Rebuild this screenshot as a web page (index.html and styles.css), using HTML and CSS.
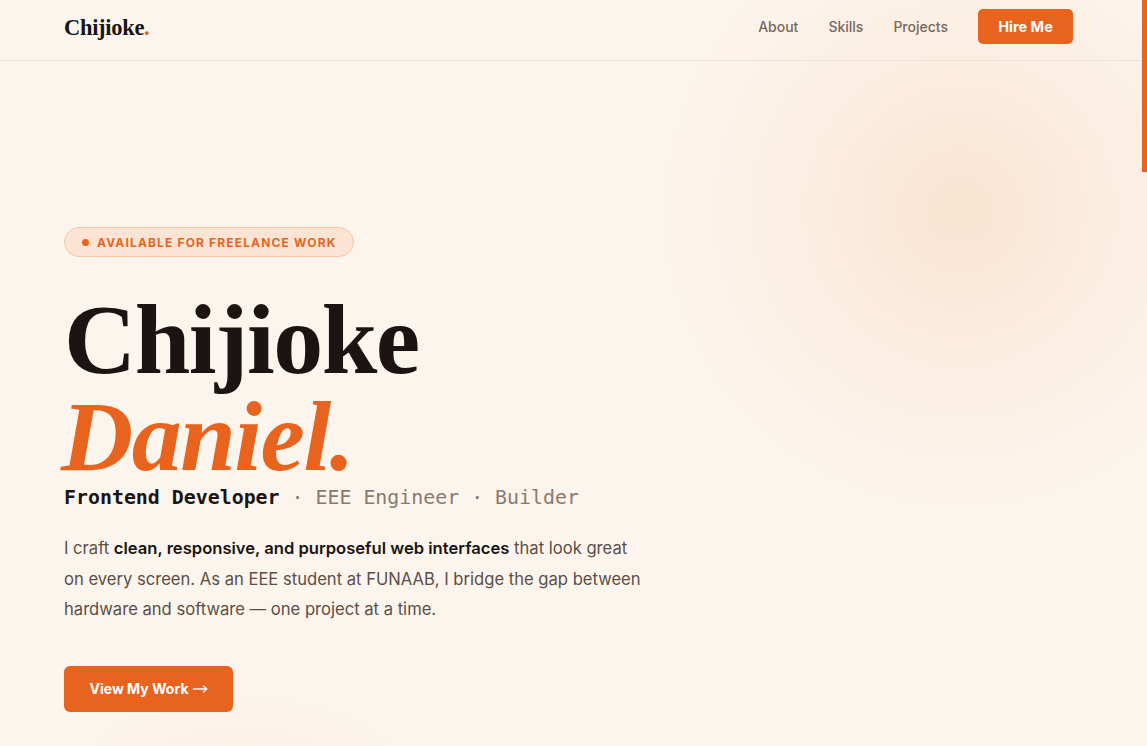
FILE: index.html
```html
<!DOCTYPE html>
<html lang="en">
<head>
<meta charset="utf-8">
<title>Chijioke Daniel</title>
<link rel="stylesheet" href="styles.css">
</head>
<body>
<div class="glow glow-top"></div>
<div class="glow glow-bottom"></div>
<header class="site-header">
  <a class="logo" href="#">Chijioke<span class="dot">.</span></a>
  <nav class="nav">
    <a href="#" class="nav-link">About</a>
    <a href="#" class="nav-link">Skills</a>
    <a href="#" class="nav-link">Projects</a>
    <a href="#" class="btn btn-small">Hire Me</a>
  </nav>
</header>
<main class="hero">
  <div class="badge"><span class="badge-dot"></span>AVAILABLE FOR FREELANCE WORK</div>
  <h1 class="title"><span class="first">Chijioke</span><span class="last">Daniel.</span></h1>
  <p class="roles"><span class="role-main">Frontend Developer</span> · EEE Engineer · Builder</p>
  <p class="intro">I craft <strong>clean, responsive, and purposeful web interfaces</strong> that look great on every screen. As an EEE student at FUNAAB, I bridge the gap between hardware and software — one project at a time.</p>
  <a href="#" class="btn btn-large">View My Work<svg class="arrow" width="15" height="8" viewBox="0 0 15 8" aria-hidden="true"><path d="M0.5 4 H13.5 M10.5 1 L13.8 4 L10.5 7" fill="none" stroke="#fff" stroke-width="1.3" stroke-linecap="round" stroke-linejoin="round"/></svg></a>
</main>
<div class="scroll-thumb"></div>
</body>
</html>
```
FILE: styles.css
```css
* { box-sizing: border-box; }
html, body { margin: 0; padding: 0; }
body {
  background: #fcf5ee;
  font-family: "Inter", "DejaVu Sans", sans-serif;
  color: #1a1512;
  height: 746px;
  overflow: hidden;
  position: relative;
}
a { text-decoration: none; color: inherit; }

.glow {
  position: absolute;
  border-radius: 50%;
  pointer-events: none;
}
.glow-top {
  left: 650px;
  top: -100px;
  width: 620px;
  height: 620px;
  background: radial-gradient(circle at center, rgba(248, 220, 196, 0.7) 0%, rgba(250, 228, 208, 0.42) 35%, rgba(252, 240, 230, 0) 70%);
}
.glow-bottom {
  left: 60px;
  top: 690px;
  width: 360px;
  height: 200px;
  background: radial-gradient(ellipse at center, rgba(249, 232, 216, 0.6) 0%, rgba(252, 245, 238, 0) 70%);
}

.site-header {
  position: relative;
  height: 61px;
  padding: 9px 74px 0 64px;
  display: flex;
  align-items: flex-start;
  justify-content: space-between;
  border-bottom: 1px solid #eee1d5;
}
.logo {
  font-family: "Liberation Serif", "DejaVu Serif", serif;
  font-weight: 700;
  font-size: 22.5px;
  line-height: 38px;
  letter-spacing: -0.3px;
  color: #1a1512;
}
.logo .dot { color: #e8641e; }
.nav {
  display: flex;
  align-items: center;
  gap: 30px;
  height: 35px;
}
.nav-link {
  font-size: 14px;
  color: #76685d;
  font-weight: 500;
}
.btn {
  background: #e8641e;
  color: #fff;
  font-weight: 700;
  display: inline-flex;
  align-items: center;
  justify-content: center;
}
.btn-small {
  width: 95px;
  height: 35px;
  border-radius: 5px;
  font-size: 14.5px;
}

.hero {
  position: relative;
  padding: 166px 0 0 64px;
}
.badge {
  display: inline-flex;
  align-items: center;
  height: 30px;
  padding: 0 17px 0 17px;
  border-radius: 15px;
  background: #fbe4d3;
  border: 1px solid #f5c7a6;
  color: #e8641e;
  font-size: 12px;
  font-weight: 700;
  letter-spacing: 1.15px;
}
.badge-dot {
  width: 7px;
  height: 7px;
  border-radius: 50%;
  background: #e8641e;
  margin-right: 8px;
}
.title {
  margin: 34px 0 0 0;
  font-family: "Liberation Serif", "DejaVu Serif", serif;
  font-weight: 700;
  font-size: 100px;
  line-height: 97px;
  letter-spacing: -1.5px;
}
.title span { display: block; }
.first { color: #1a1512; }
.last {
  color: #e8641e;
  font-style: italic;
  margin-left: -3px;
}
.roles {
  margin: -2px 0 0 0;
  font-family: "DejaVu Sans Mono", "Liberation Mono", monospace;
  font-size: 19.9px;
  line-height: 30px;
  color: #8a7a6e;
}
.role-main {
  color: #1a1512;
  font-weight: 700;
}
.intro {
  margin: 20px 0 0 0;
  max-width: 582px;
  font-size: 16.6px;
  line-height: 30.5px;
  color: #5b4e45;
}
.intro strong {
  color: #1a1512;
  font-weight: 600;
}
.btn-large {
  margin-top: 41px;
  width: 169px;
  height: 46px;
  border-radius: 6px;
  font-size: 14px;
  gap: 4px;
}
.arrow { display: block; margin-top: 1px; }

.scroll-thumb {
  position: fixed;
  right: 0;
  top: 0;
  width: 5px;
  height: 172px;
  background: #e8641e;
}
```
